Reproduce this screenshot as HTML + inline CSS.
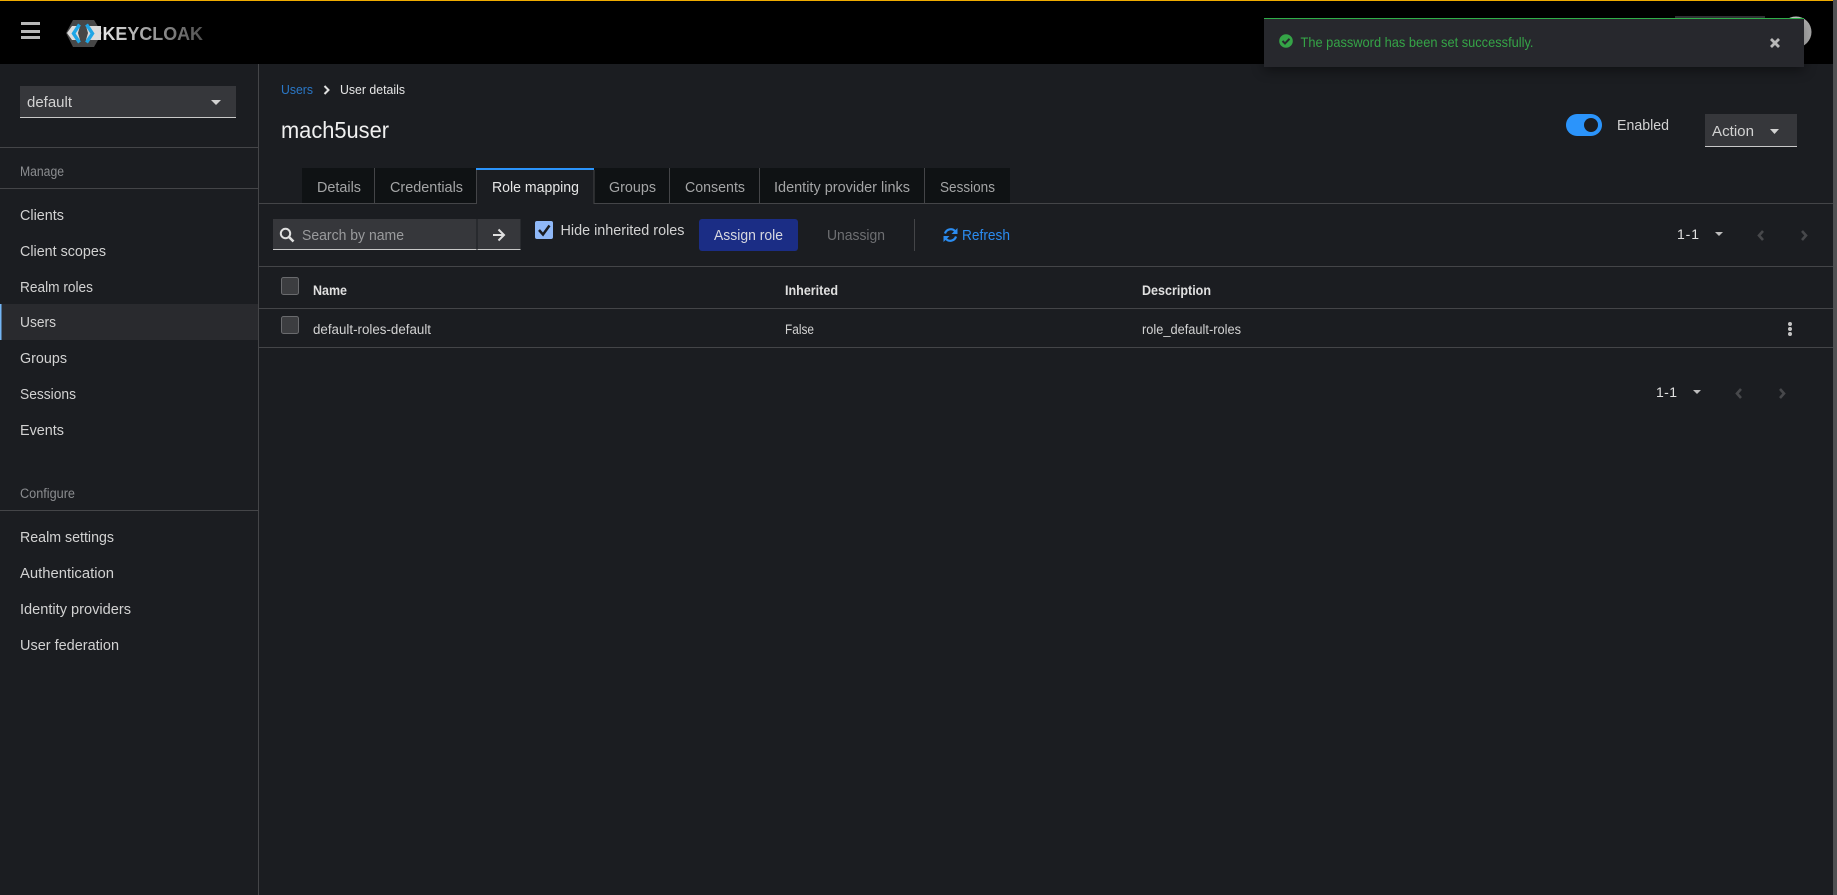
<!DOCTYPE html>
<html lang="en">
<head>
<meta charset="utf-8">
<title>Keycloak - User details</title>
<style>
html,body{margin:0;padding:0;background:#1b1d21;width:1837px;height:895px;overflow:hidden}
svg{display:block}
text{font-family:"Liberation Sans",sans-serif;white-space:pre}
.nav{font-size:15px;fill:#d2d2d2}
.grp{font-size:13.5px;fill:#8b8d90}
.tab{font-size:15px;fill:#a4a5a6}
.t{font-size:13.5px;fill:#d2d2d2}
.b{font-size:13.5px;font-weight:bold;fill:#e0e0e0}
</style>
</head>
<body>
<svg width="1837" height="895" viewBox="0 0 1837 895" xmlns="http://www.w3.org/2000/svg">
<defs>
<linearGradient id="kc" x1="0" x2="1" y1="0" y2="0"><stop offset="0" stop-color="#e4e4e4"/><stop offset=".4" stop-color="#a8a8a8"/><stop offset="1" stop-color="#505050"/></linearGradient>
<linearGradient id="av" x1="0" x2="1" y1="0" y2="0"><stop offset="0" stop-color="#ffffff"/><stop offset="1" stop-color="#a8a8a8"/></linearGradient>
</defs>
<rect width="1837" height="895" fill="#1b1d21"/>
<!-- masthead -->
<rect width="1837" height="64" fill="#000"/>
<rect width="1833" height="1" fill="#f0ab00"/>
<g fill="#b8b8b8"><rect x="21" y="22" width="19" height="3"/><rect x="21" y="30" width="19" height="3"/><rect x="21" y="36" width="19" height="3"/></g>
<!-- logo -->
<polygon points="73,20 94,20 102,33 94,47 73,47 66,33" fill="#474747"/>
<polygon points="72,26 101,26 101,40 72,40 67,33" fill="#dcdcdc"/>
<polygon points="80,26 86,26 88,33 86,40 80,40 78,33" fill="#474747"/>
<path d="M79.500 24.500 L73.500 33.500 L79.500 42.500" fill="none" stroke="#1fa6e6" stroke-width="3.400"/>
<path d="M86.500 24.500 L92.500 33.500 L86.500 42.500" fill="none" stroke="#1fa6e6" stroke-width="3.400"/>
<text x="102.500" y="40" font-size="18" font-weight="bold" fill="url(#kc)" textLength="100.500" lengthAdjust="spacingAndGlyphs">KEYCLOAK</text>
<!-- header behind alert -->
<rect x="1675" y="16" width="90" height="30" fill="#36373b"/>
<circle cx="1796" cy="32" r="15.500" fill="url(#av)"/>
<!-- sidebar -->
<rect x="258" y="64" width="1" height="831" fill="#444548"/>
<rect x="20" y="86" width="216" height="31" fill="#36373b"/><rect x="20" y="117" width="216" height="1" fill="#c8c8c8"/>
<text x="27" y="107" font-size="15" fill="#d2d2d2" textLength="45" lengthAdjust="spacingAndGlyphs">default</text>
<polygon points="211,100 221,100 216,105" fill="#d2d2d2"/>
<rect y="147" width="258" height="1" fill="#444548"/>
<text class="grp" x="20" y="176" textLength="44" lengthAdjust="spacingAndGlyphs">Manage</text>
<rect y="188" width="258" height="1" fill="#444548"/>
<rect y="304" width="258" height="36" fill="#292a2e"/><rect y="304" width="1.500" height="36" fill="#73b5f5"/>
<text class="nav" x="20" y="220" textLength="44" lengthAdjust="spacingAndGlyphs">Clients</text>
<text class="nav" x="20" y="256" textLength="86" lengthAdjust="spacingAndGlyphs">Client scopes</text>
<text class="nav" x="20" y="292" textLength="73" lengthAdjust="spacingAndGlyphs">Realm roles</text>
<text class="nav" x="20" y="327" textLength="36" lengthAdjust="spacingAndGlyphs">Users</text>
<text class="nav" x="20" y="363" textLength="47" lengthAdjust="spacingAndGlyphs">Groups</text>
<text class="nav" x="20" y="399" textLength="56" lengthAdjust="spacingAndGlyphs">Sessions</text>
<text class="nav" x="20" y="435" textLength="44" lengthAdjust="spacingAndGlyphs">Events</text>
<text class="grp" x="20" y="498" textLength="55" lengthAdjust="spacingAndGlyphs">Configure</text>
<rect y="510" width="258" height="1" fill="#444548"/>
<text class="nav" x="20" y="542" textLength="94" lengthAdjust="spacingAndGlyphs">Realm settings</text>
<text class="nav" x="20" y="578" textLength="94" lengthAdjust="spacingAndGlyphs">Authentication</text>
<text class="nav" x="20" y="614" textLength="111" lengthAdjust="spacingAndGlyphs">Identity providers</text>
<text class="nav" x="20" y="650" textLength="99" lengthAdjust="spacingAndGlyphs">User federation</text>
<!-- breadcrumb and title -->
<text x="281" y="94" font-size="13" fill="#2a78c8" textLength="32" lengthAdjust="spacingAndGlyphs">Users</text>
<path d="M324.500 86 L328.500 90 L324.500 94" fill="none" stroke="#e0e0e0" stroke-width="2"/>
<text x="340" y="94" font-size="13" fill="#e6e6e6" textLength="65" lengthAdjust="spacingAndGlyphs">User details</text>
<text x="281" y="138" font-size="23" fill="#f0f0f0" textLength="108" lengthAdjust="spacingAndGlyphs">mach5user</text>
<!-- toggle and action -->
<rect x="1566" y="114" width="36" height="22" rx="11" fill="#2b94fb"/>
<circle cx="1591" cy="125" r="7" fill="#1b1d21"/>
<text x="1617" y="130" font-size="15" fill="#d2d2d2" textLength="52" lengthAdjust="spacingAndGlyphs">Enabled</text>
<rect x="1705" y="114" width="92" height="32" fill="#36373b"/><rect x="1705" y="146" width="92" height="1" fill="#c8c8c8"/>
<text x="1712" y="136" font-size="15" fill="#d2d2d2" textLength="42" lengthAdjust="spacingAndGlyphs">Action</text>
<polygon points="1770,129 1779,129 1774.500,134" fill="#d2d2d2"/>
<!-- tabs -->
<rect x="302" y="168" width="708" height="35" fill="#0f1214"/>
<rect x="259" y="203" width="1574" height="1" fill="#444548"/>
<rect x="476" y="168" width="118" height="36" fill="#1b1d21"/>
<rect x="476" y="168" width="118" height="2" fill="#2b94fb"/>
<g fill="#444548"><rect x="374" y="168" width="1" height="35"/><rect x="476" y="170" width="1" height="34"/><rect x="593.500" y="170" width="1" height="34"/><rect x="669" y="168" width="1" height="35"/><rect x="759" y="168" width="1" height="35"/><rect x="924" y="168" width="1" height="35"/></g>
<text class="tab" x="317" y="192" textLength="44" lengthAdjust="spacingAndGlyphs">Details</text>
<text class="tab" x="390" y="192" textLength="73" lengthAdjust="spacingAndGlyphs">Credentials</text>
<text class="tab" x="492" y="192" textLength="87" lengthAdjust="spacingAndGlyphs" style="fill:#e6e6e6">Role mapping</text>
<text class="tab" x="609" y="192" textLength="47" lengthAdjust="spacingAndGlyphs">Groups</text>
<text class="tab" x="685" y="192" textLength="60" lengthAdjust="spacingAndGlyphs">Consents</text>
<text class="tab" x="774" y="192" textLength="136" lengthAdjust="spacingAndGlyphs">Identity provider links</text>
<text class="tab" x="940" y="192" textLength="55" lengthAdjust="spacingAndGlyphs">Sessions</text>
<!-- toolbar -->
<rect x="273" y="219" width="203.500" height="30" fill="#36373b"/><rect x="273" y="249" width="203.500" height="1" fill="#c8c8c8"/>
<rect x="477.500" y="219" width="43" height="30" fill="#36373b"/><rect x="477.500" y="249" width="43" height="1" fill="#c8c8c8"/>
<circle cx="285.500" cy="233.500" r="4.700" fill="none" stroke="#e0e0e0" stroke-width="2"/>
<path d="M289 237 L293.500 241.500" stroke="#e0e0e0" stroke-width="2.600" fill="none"/>
<text x="302" y="240" font-size="15" fill="#9a9b9d" textLength="102" lengthAdjust="spacingAndGlyphs">Search by name</text>
<path d="M493 235 H503 M498.500 229.500 L504 235 L498.500 240.500" fill="none" stroke="#e0e0e0" stroke-width="2"/>
<rect x="535" y="221" width="18" height="18" rx="2" fill="#8fb8f8"/>
<path d="M539 230 L543 234.500 L549.500 225.500" fill="none" stroke="#1b1d21" stroke-width="2.500"/>
<text x="560.500" y="235" font-size="15" fill="#d2d2d2" textLength="124" lengthAdjust="spacingAndGlyphs">Hide inherited roles</text>
<rect x="699" y="219" width="99" height="32" rx="3" fill="#1b2d85"/>
<text x="714" y="240" font-size="15" fill="#d8d8e0" textLength="69" lengthAdjust="spacingAndGlyphs">Assign role</text>
<text x="827" y="240" font-size="15" fill="#6e6f72" textLength="58" lengthAdjust="spacingAndGlyphs">Unassign</text>
<rect x="914" y="219" width="1" height="32" fill="#444548"/>
<g fill="none" stroke="#2b8cf0" stroke-width="2.200">
<path d="M945 233.500 A6 6 0 0 1 955 231"/>
<path d="M956 236.500 A6 6 0 0 1 946 239"/>
</g>
<polygon points="957.500,228 957.500,234 951.500,234" fill="#2b8cf0"/>
<polygon points="943.500,242 943.500,236 949.500,236" fill="#2b8cf0"/>
<text x="962" y="240" font-size="15" fill="#2b8cf0" textLength="48" lengthAdjust="spacingAndGlyphs">Refresh</text>
<!-- top pagination -->
<text x="1677" y="239" font-size="14" fill="#e0e0e0" textLength="22" lengthAdjust="spacing">1-1</text>
<polygon points="1715,232 1723,232 1719,236" fill="#bdbdbd"/>
<g fill="none" stroke="#47484b" stroke-width="2.600"><path d="M1763 231 L1759 235.500 L1763 240"/><path d="M1802 231 L1806 235.500 L1802 240"/></g>
<!-- table -->
<g fill="#444548"><rect x="259" y="266" width="1574" height="1"/><rect x="259" y="308" width="1574" height="1"/><rect x="259" y="347" width="1574" height="1"/></g>
<rect x="281.500" y="277.500" width="17" height="17" rx="2" fill="#3c3d40" stroke="#6a6b6e"/>
<rect x="281.500" y="316.500" width="17" height="17" rx="2" fill="#3c3d40" stroke="#6a6b6e"/>
<text class="b" x="313" y="295" textLength="34" lengthAdjust="spacingAndGlyphs">Name</text>
<text class="b" x="785" y="295" textLength="53" lengthAdjust="spacingAndGlyphs">Inherited</text>
<text class="b" x="1142" y="295" textLength="69" lengthAdjust="spacingAndGlyphs">Description</text>
<text class="t" x="313" y="334" textLength="118" lengthAdjust="spacingAndGlyphs">default-roles-default</text>
<text class="t" x="785" y="334" textLength="29" lengthAdjust="spacingAndGlyphs">False</text>
<text class="t" x="1142" y="334" textLength="99" lengthAdjust="spacingAndGlyphs">role_default-roles</text>
<g fill="#c4c4c4"><circle cx="1790" cy="324" r="2"/><circle cx="1790" cy="329" r="2"/><circle cx="1790" cy="334" r="2"/></g>
<!-- bottom pagination -->
<text x="1656" y="397" font-size="14" fill="#e0e0e0" textLength="21" lengthAdjust="spacing">1-1</text>
<polygon points="1693,390 1701,390 1697,394" fill="#bdbdbd"/>
<g fill="none" stroke="#47484b" stroke-width="2.600"><path d="M1741 389 L1737 393.500 L1741 398"/><path d="M1780 389 L1784 393.500 L1780 398"/></g>
<!-- alert -->
<rect x="1264" y="18" width="540" height="49" fill="#27282d" style="filter:drop-shadow(0 3px 6px rgba(0,0,0,.45))"/>
<rect x="1264" y="18" width="540" height="1" fill="#2fae49"/>
<circle cx="1286" cy="41" r="6.800" fill="#35a447"/>
<path d="M1282.500 41 L1285 43.500 L1289.500 38.800" fill="none" stroke="#27282d" stroke-width="2"/>
<text x="1300.500" y="47" font-size="14" fill="#35a447" textLength="233" lengthAdjust="spacingAndGlyphs">The password has been set successfully.</text>
<path d="M1771 39 L1779 47 M1779 39 L1771 47" stroke="#b8b8b8" stroke-width="2.800" fill="none"/>
<!-- right edge strip -->
<rect x="1833" y="0" width="4" height="895" fill="#505153"/>
</svg>
</body>
</html>
